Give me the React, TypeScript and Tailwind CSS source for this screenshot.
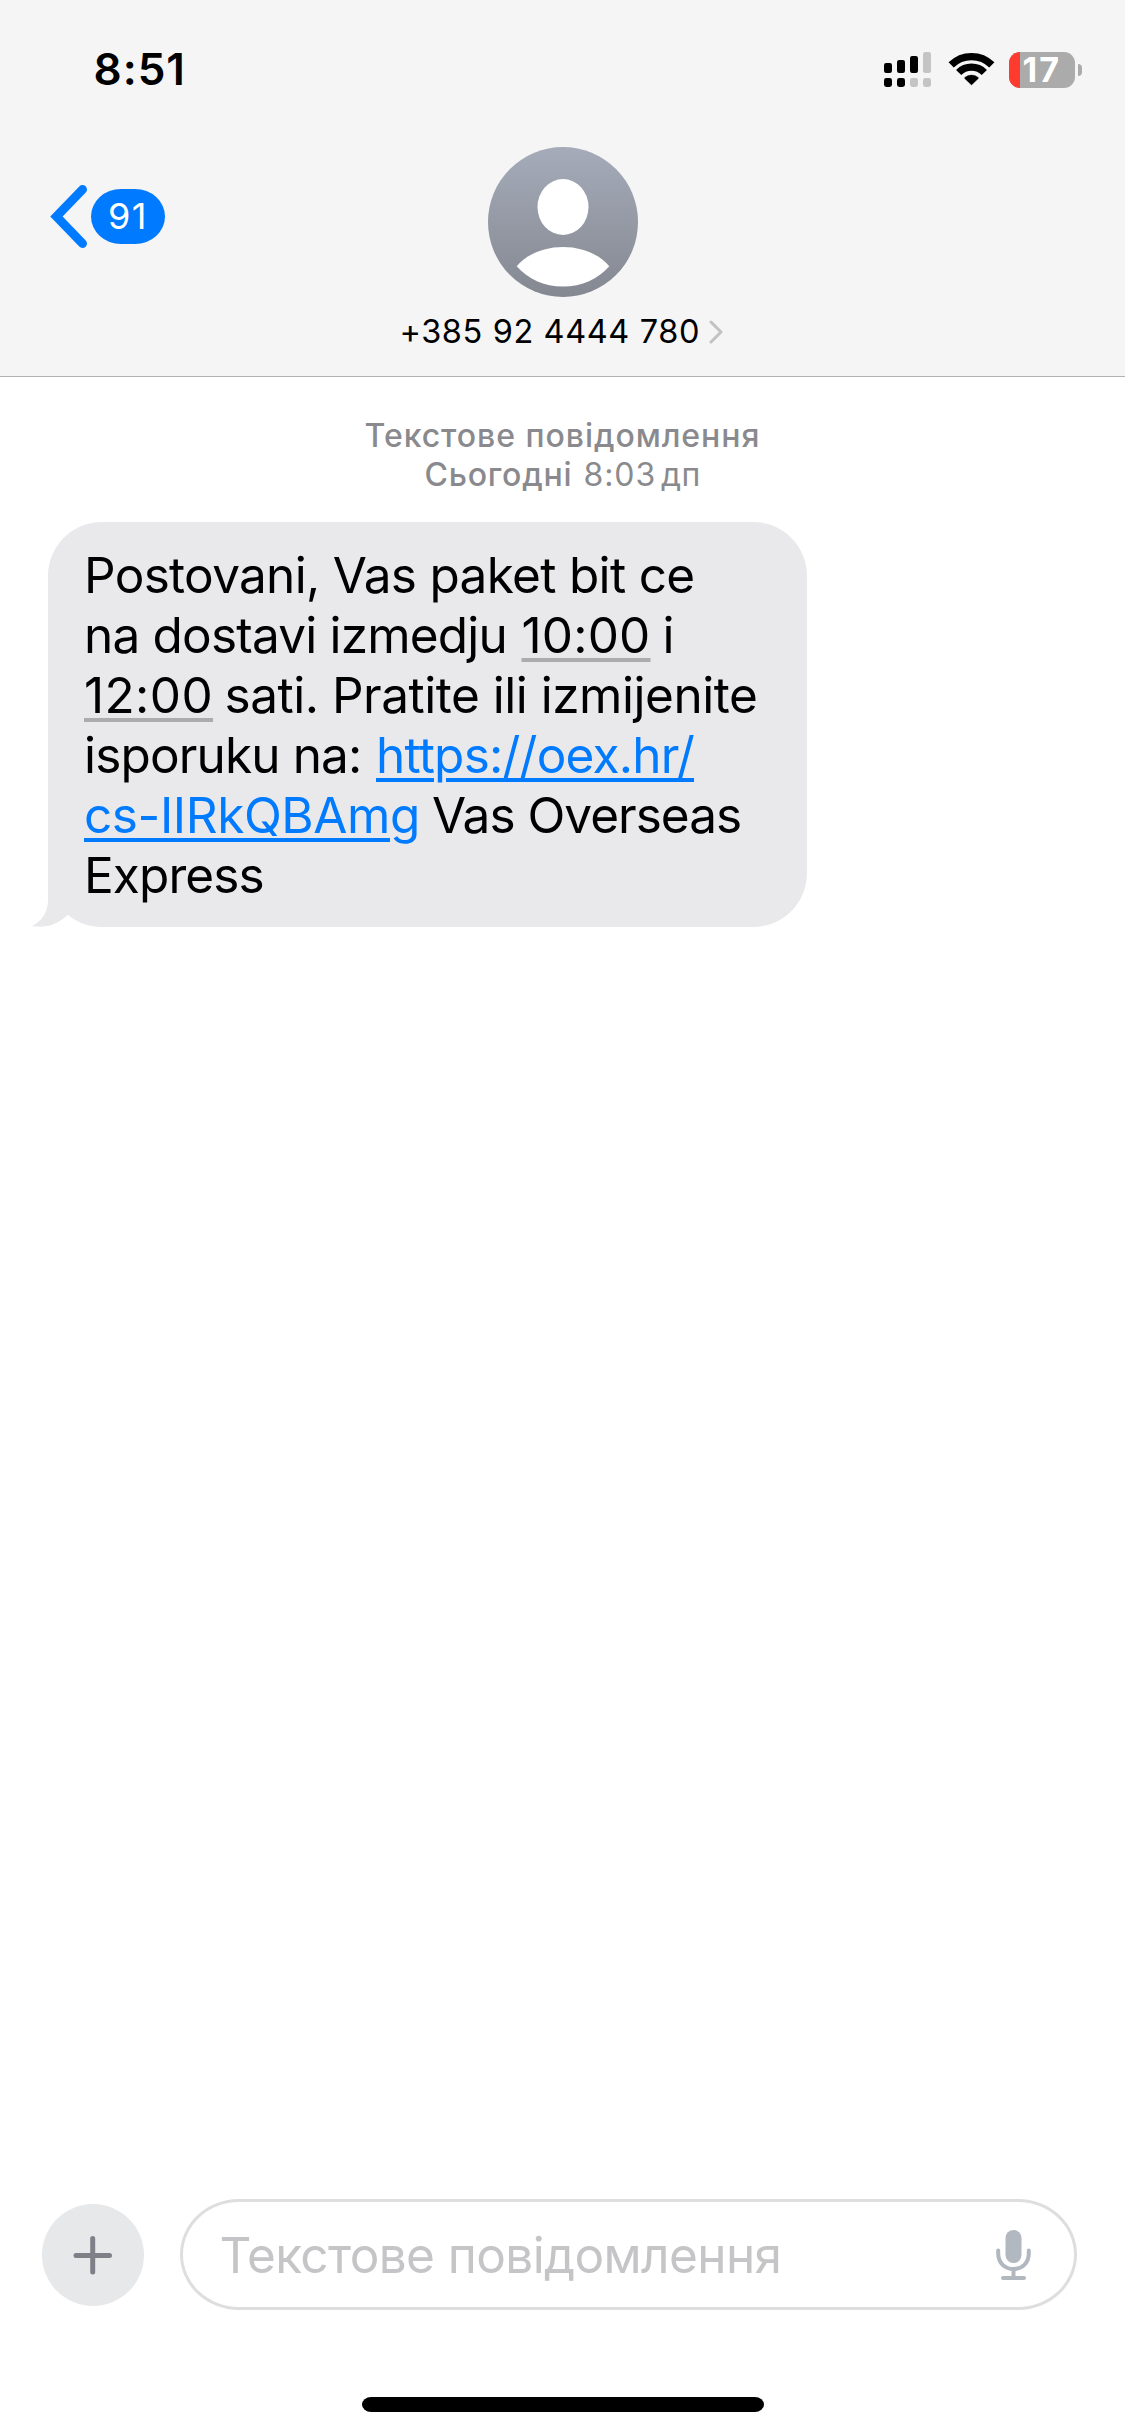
import type { ReactNode } from "react";

function Signal() {
  return (
    <svg width="47" height="35" viewBox="0 0 47 35" aria-hidden="true">
      <g fill="#000">
        <rect x="0" y="11" width="8" height="10" rx="2.2" />
        <rect x="13" y="8" width="8" height="13" rx="2.2" />
        <rect x="26" y="4" width="8" height="17" rx="2.2" />
        <rect x="0" y="26" width="8" height="9" rx="2.4" />
        <rect x="13" y="26" width="8" height="9" rx="2.4" />
      </g>
      <g fill="#c4c4c4">
        <rect x="39" y="0" width="8" height="21" rx="2.2" />
        <rect x="26" y="26" width="8" height="9" rx="2.4" />
        <rect x="39" y="26" width="8" height="9" rx="2.4" />
      </g>
    </svg>
  );
}

function Wifi() {
  return (
    <svg width="47" height="34" viewBox="0 0 141 102" aria-hidden="true">
      <g fill="none" stroke="#000" strokeWidth="22">
        <path d="M9.4 38.9A86.5 86.5 0 0 1 131.6 38.9" />
        <path d="M32 61.5A54.5 54.5 0 0 1 109 61.5" />
      </g>
      <path d="M70.5 99L50 79.5Q49 77.500 51 76Q59.500 69 70.500 69T90 76Q92 77.500 91 79.500Z" stroke="#000" strokeWidth="1" />
    </svg>
  );
}

function Battery() {
  return (
    <div className="flex items-center gap-[3px]">
      <div className="flex h-9 w-[66px] items-center rounded-[11px] bg-[#ababab]">
        <div className="h-full w-[11px] shrink-0 rounded-l-[11px] bg-[#ff3b30]" />
        <span className="ml-[2.500px] text-[34px] leading-9 font-bold tracking-[2px] text-white">17</span>
      </div>
      <div className="h-3 w-1 rounded-r-full bg-[#ababab]" />
    </div>
  );
}

function Avatar() {
  return (
    <svg width="150" height="150" viewBox="0 0 150 150" aria-hidden="true">
      <defs>
        <linearGradient id="avatar" x1="0" y1="0" x2="0" y2="1">
          <stop offset="0" stopColor="#a5abb9" />
          <stop offset="1" stopColor="#848891" />
        </linearGradient>
      </defs>
      <circle cx="75" cy="75" r="75" fill="url(#avatar)" />
      <ellipse cx="75" cy="60" rx="25.500" ry="28" fill="#fff" />
      <path d="M28.700 119.300C38 108 55 100 75 100S112 108 121.300 119.300C110 132 94 139.600 75 139.600S40 132 28.700 119.300Z" fill="#fff" />
    </svg>
  );
}

function Line({ children }: { children: ReactNode }) {
  return <div className="flex h-[60px] whitespace-pre">{children}</div>;
}

export default function App() {
  return (
    <div className="flex h-[2436px] w-[1125px] flex-col bg-white font-['Inter','Liberation_Sans',sans-serif] text-black">
      <header className="flex h-[377px] flex-col border-b border-[#b2b2b2] bg-[#f5f5f5]">
        <div className="flex h-[139px] items-center justify-between pr-[43px] pl-[93.500px]">
          <span className="-mt-0.5 text-[44px] leading-[44px] font-semibold tracking-[1px]">8:51</span>
          <div className="flex items-center">
            <Signal />
            <div className="mr-[14px] ml-[17px] -mt-0.5"><Wifi /></div>
            <Battery />
          </div>
        </div>
        <div className="grid grid-cols-[1fr_auto_1fr] items-start">
          <button className="mt-[45px] ml-[49px] flex items-center gap-1">
            <svg width="38" height="65" viewBox="0 0 38 65" fill="none" stroke="#007aff" strokeWidth="9" strokeLinecap="round" strokeLinejoin="miter" aria-hidden="true">
              <path d="M33.500 5.500L7.500 32.500L33.500 59.500" />
            </svg>
            <span className="flex h-[55px] w-[74px] items-center justify-center rounded-[30px/27.500px] bg-[#007aff] pb-px text-[36px] leading-none tracking-[1.500px] text-white">91</span>
          </button>
          <div className="flex flex-col items-center pt-2">
            <Avatar />
            <div className="mt-[15px] -ml-[3px] flex h-10 items-center gap-[8.500px]">
              <span className="text-[32.500px] leading-10 tracking-[0.600px]">+385 92 4444 780</span>
              <svg width="14" height="24" viewBox="0 0 14 24" fill="none" stroke="#c2c2c4" strokeWidth="3" strokeLinecap="round" strokeLinejoin="round" aria-hidden="true">
                <path d="M2 2L12 12L2 22" />
              </svg>
            </div>
          </div>
          <div />
        </div>
      </header>

      <main className="flex-1">
        <div className="mt-[39px] flex flex-col items-center text-[32px] leading-[39px] text-[#8a8a8e]">
          <div className="font-medium tracking-[0.950px]">Текстове повідомлення</div>
          <div className="flex">
            <span className="font-medium tracking-[0.800px]">Сьогодні</span>
            <span className="ml-[11px] tracking-[0.900px]">8:03</span>
            <span className="ml-[5px] tracking-[0.300px]">дп</span>
          </div>
        </div>

        <div className="relative mt-[28px] ml-12 h-[405px] w-[759px] rounded-[54px] bg-[#e9e9eb] pt-[23px] pl-9 text-[49.500px] leading-[60px]">
          <svg className="absolute bottom-0 -left-[18px]" width="62" height="57" viewBox="0 0 62 57" fill="#e9e9eb" aria-hidden="true">
            <path d="M18 0V30C18 42 12 51 2 56C15 58.500 27 55 37.500 45L60 20V0Z" />
          </svg>
          <div className="relative">
            <Line><span className="tracking-[-0.690px]">Postovani, Vas paket bit ce</span></Line>
            <Line>
              <span className="tracking-[-0.800px]">na dostavi izmedju</span>
              <span className="ml-[14.500px] w-[129px] tracking-[0.180px] underline decoration-[#acacae] decoration-[3.500px] underline-offset-[5px]">10:00</span>
              <span className="ml-3">i</span>
            </Line>
            <Line>
              <span className="w-[129px] tracking-[0.400px] underline decoration-[#acacae] decoration-[3.500px] underline-offset-[5px]">12:00</span>
              <span className="ml-[11.500px] tracking-[-0.480px]">sati. Pratite ili izmijenite</span>
            </Line>
            <Line>
              <span className="tracking-[-0.850px]">isporuku na:</span>
              <a className="ml-[14.500px] tracking-[-0.770px] text-[#007aff] underline decoration-[3.500px] underline-offset-[5px]">https://oex.hr/</a>
            </Line>
            <Line>
              <a className="tracking-[-0.410px] text-[#007aff] underline decoration-[3.500px] underline-offset-[5px]">cs-IIRkQBAmg</a>
              <span className="ml-3 tracking-[-1px]">Vas Overseas</span>
            </Line>
            <Line><span className="tracking-[-0.900px]">Express</span></Line>
          </div>
        </div>
      </main>

      <footer className="flex h-[237px] flex-col">
        <div className="flex h-[111px] items-center pl-[42px]">
          <button className="flex size-[102px] items-center justify-center rounded-full bg-[#e7e8ea]">
            <svg width="40" height="40" viewBox="0 0 40 40" stroke="#7f8087" strokeWidth="5" strokeLinecap="round" aria-hidden="true">
              <path d="M3 20.500H36.500M19.700 3.500V37" />
            </svg>
          </button>
          <div className="ml-9 flex h-[111px] w-[897px] items-center justify-between rounded-[59px/55.500px] border-[3px] border-[#dedede] pr-[42px] pl-[36.500px]">
            <span className="text-[49.500px] leading-[60px] tracking-[-0.600px] text-[#c5c5c7]">Текстове повідомлення</span>
            <svg className="mt-px" width="36" height="51" viewBox="0 0 36 51" fill="none" stroke="#b2b8c0" strokeWidth="4" strokeLinecap="round" aria-hidden="true">
              <rect x="9.500" y="0" width="16" height="33" rx="8" fill="#b2b8c0" stroke="none" />
              <path d="M2.200 20.500V23.500C2.200 33 9 39 17.500 39S32.800 33 32.800 23.500V20.500M17.500 39V48M7 48H28" />
            </svg>
          </div>
        </div>
        <div className="mx-auto mt-[87px] h-[15px] w-[402px] rounded-[9px/7.500px] bg-black" />
      </footer>
    </div>
  );
}
